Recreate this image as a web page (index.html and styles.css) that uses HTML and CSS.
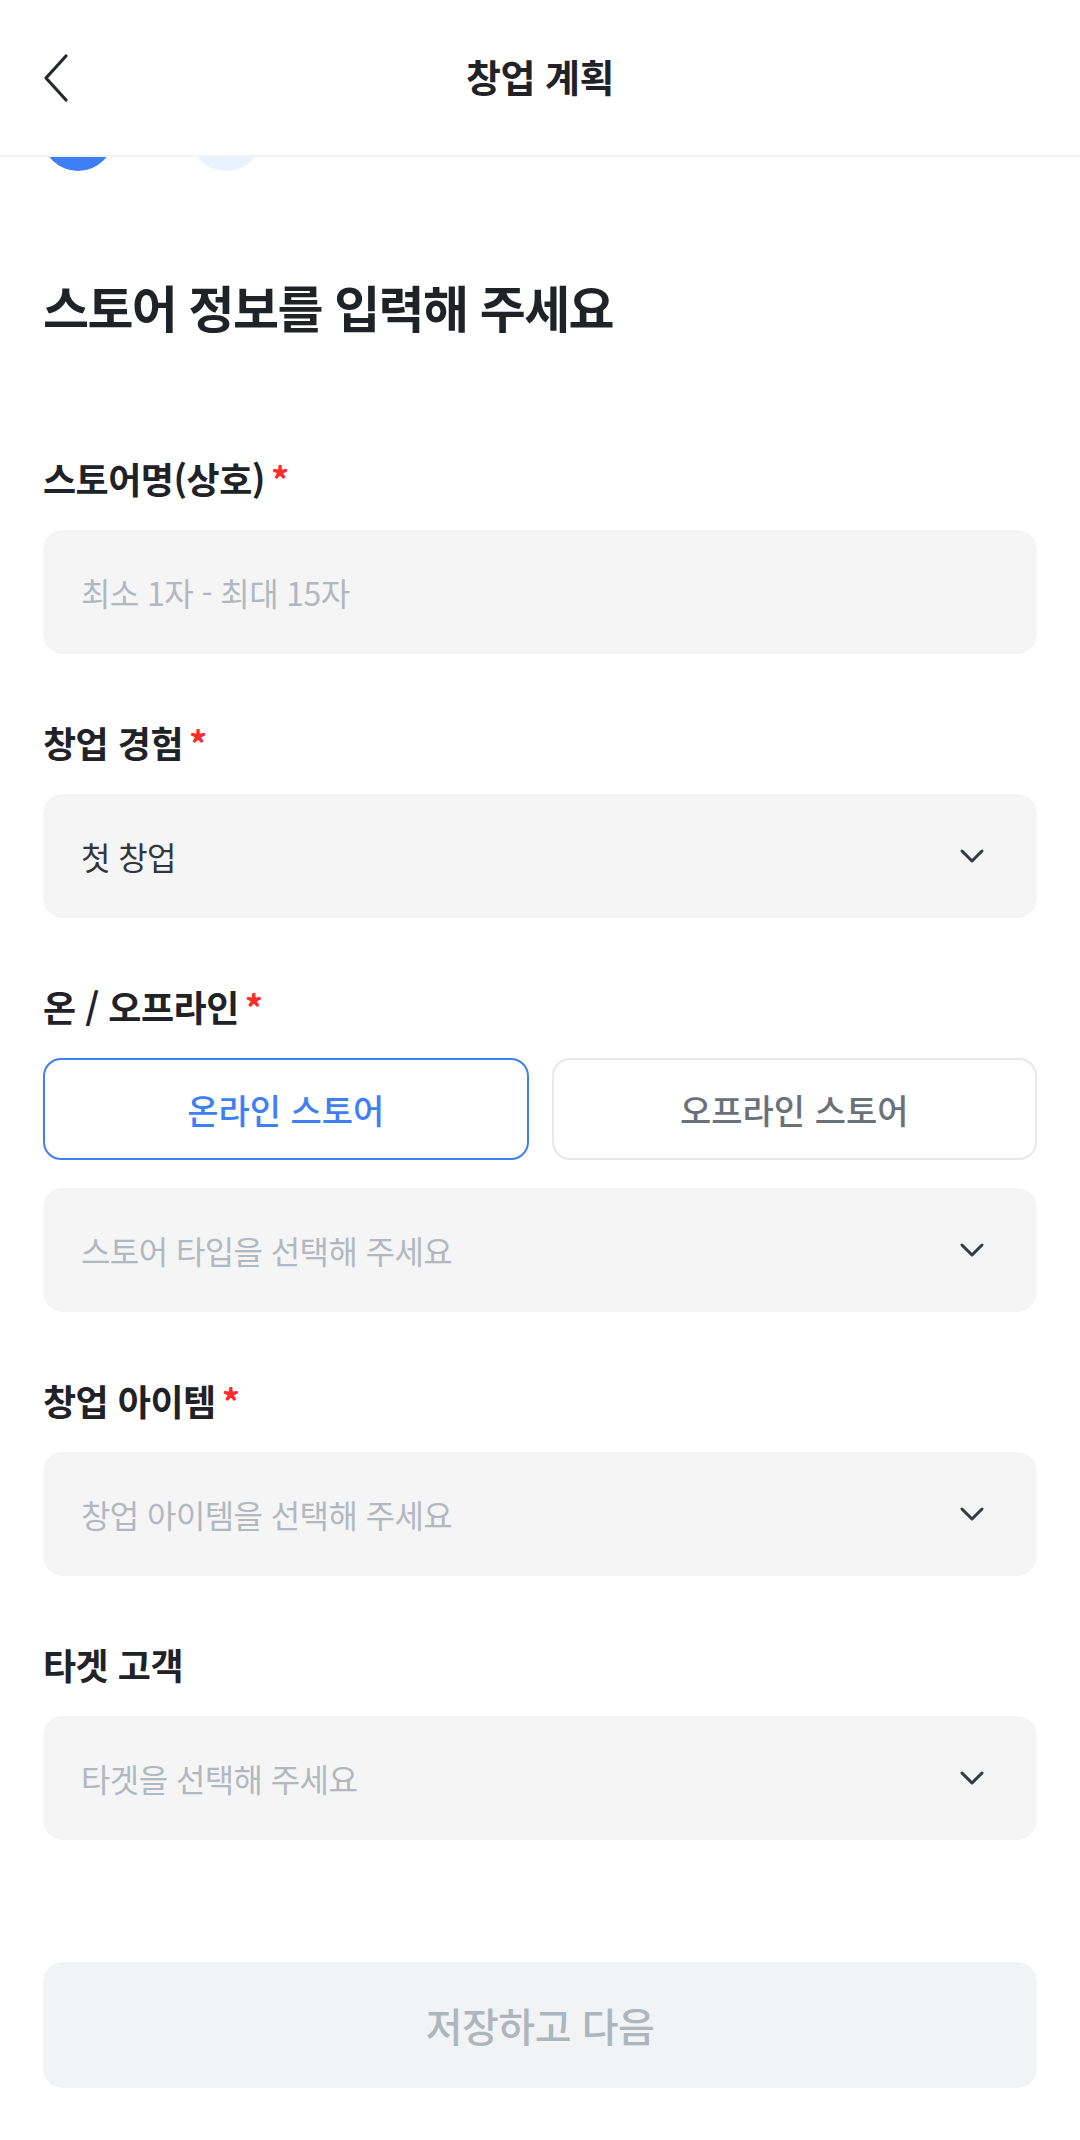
FILE: index.html
```html
<!DOCTYPE html>
<html lang="ko">
<head>
    <meta charset="UTF-8">
    <meta name="viewport" content="width=device-width, initial-scale=1.0">
    <title>창업 계획</title>
    <link rel="stylesheet" href="styles.css">
</head>
<body>
    <div class="header">
        <button class="back-btn" aria-label="뒤로">
            <svg width="26" height="50" viewBox="0 0 26 50"><polyline points="23,3 3,25 23,47" fill="none" stroke="#24272c" stroke-width="3.2" stroke-linecap="round" stroke-linejoin="round"/></svg>
        </button>
        <div class="header-title">창업 계획</div>
        <div></div>
    </div>
    <div class="steps">
        <span class="step active"></span>
        <span class="step"></span>
    </div>
    <div class="content">
        <h1>스토어 정보를 입력해 주세요</h1>
        <div class="form">
            <div class="field">
                <label class="label">스토어명(상호)<span class="req">*</span></label>
                <input class="input" type="text" placeholder="최소 1자 - 최대 15자">
            </div>
            <div class="field">
                <label class="label">창업 경험<span class="req">*</span></label>
                <div class="select">
                    <span class="value">첫 창업</span>
                    <svg class="chev" width="26" height="16" viewBox="0 0 26 16"><polyline points="3,3 13,13 23,3" fill="none" stroke="#343a43" stroke-width="3" stroke-linecap="round" stroke-linejoin="round"/></svg>
                </div>
            </div>
            <div class="field">
                <label class="label">온 / 오프라인<span class="req">*</span></label>
                <div class="toggle">
                    <button class="toggle-btn selected">온라인 스토어</button>
                    <button class="toggle-btn">오프라인 스토어</button>
                </div>
                <div class="select sub">
                    <span class="placeholder">스토어 타입을 선택해 주세요</span>
                    <svg class="chev" width="26" height="16" viewBox="0 0 26 16"><polyline points="3,3 13,13 23,3" fill="none" stroke="#343a43" stroke-width="3" stroke-linecap="round" stroke-linejoin="round"/></svg>
                </div>
            </div>
            <div class="field">
                <label class="label">창업 아이템<span class="req">*</span></label>
                <div class="select">
                    <span class="placeholder">창업 아이템을 선택해 주세요</span>
                    <svg class="chev" width="26" height="16" viewBox="0 0 26 16"><polyline points="3,3 13,13 23,3" fill="none" stroke="#343a43" stroke-width="3" stroke-linecap="round" stroke-linejoin="round"/></svg>
                </div>
            </div>
            <div class="field">
                <label class="label">타겟 고객</label>
                <div class="select">
                    <span class="placeholder">타겟을 선택해 주세요</span>
                    <svg class="chev" width="26" height="16" viewBox="0 0 26 16"><polyline points="3,3 13,13 23,3" fill="none" stroke="#343a43" stroke-width="3" stroke-linecap="round" stroke-linejoin="round"/></svg>
                </div>
            </div>
        </div>
        <button class="next-btn" disabled>저장하고 다음</button>
    </div>
</body>
</html>
```

FILE: styles.css
```css
body {
    margin: 0;
    background-color: #ffffff;
    color: #212429;
    font-family: "Noto Sans CJK KR", "Noto Sans", sans-serif;
}
.header {
    height: 155px;
    display: grid;
    grid-template-columns: 1fr auto 1fr;
    align-items: center;
    border-bottom: 2px solid #f3f3f4;
    background-color: #ffffff;
}
.back-btn {
    justify-self: start;
    margin-left: 43px;
    padding: 0;
    border: none;
    background: none;
    display: flex;
}
.header-title {
    font-size: 38px;
    font-weight: 700;
    letter-spacing: -0.5px;
    color: #1f2227;
    margin-top: -4px;
}
.steps {
    height: 14px;
    overflow: hidden;
    display: flex;
    align-items: flex-end;
    gap: 76px;
    padding-left: 42px;
}
.step {
    flex: none;
    width: 72px;
    height: 72px;
    border-radius: 50%;
    background-color: #ebf2ff;
}
.step.active {
    background-color: #3f7ff6;
}
.content {
    padding: 0 43px;
}
h1 {
    margin: 100px 0 113px;
    font-size: 50px;
    line-height: 70px;
    font-weight: 700;
    letter-spacing: -1.6px;
    color: #1f2227;
}
.form {
    display: flex;
    flex-direction: column;
    gap: 64px;
}
.field {
    display: flex;
    flex-direction: column;
}
.label {
    font-size: 36px;
    line-height: 48px;
    font-weight: 700;
    letter-spacing: -0.5px;
    color: #1f2227;
    margin-bottom: 28px;
}
.req {
    color: #ff2b2b;
    margin-left: 6px;
}
.input,
.select {
    box-sizing: border-box;
    height: 124px;
    width: 100%;
    border: none;
    border-radius: 20px;
    background-color: #f5f5f5;
    padding: 0 52px 0 38px;
    font-family: inherit;
    font-size: 32px;
    letter-spacing: -0.6px;
    color: #33373d;
    outline: none;
}
.input::placeholder {
    color: #b1b8c0;
}
.select {
    display: flex;
    align-items: center;
    justify-content: space-between;
}
.placeholder {
    color: #b1b8c0;
}
.value {
    color: #33373d;
}
.chev {
    flex: none;
}
.select.sub {
    margin-top: 28px;
}
.toggle {
    display: flex;
    gap: 23px;
}
.toggle-btn {
    flex: 1;
    height: 102px;
    box-sizing: border-box;
    border: 2px solid #e7e8ea;
    border-radius: 18px;
    background-color: #ffffff;
    font-family: inherit;
    font-size: 34px;
    font-weight: 500;
    letter-spacing: 0;
    color: #6b7179;
}
.toggle-btn.selected {
    border-color: #3f7ff6;
    color: #3f7ff6;
}
.next-btn {
    display: block;
    width: 100%;
    height: 126px;
    margin-top: 122px;
    border: none;
    border-radius: 20px;
    background-color: #f2f3f5;
    font-family: inherit;
    font-size: 40px;
    font-weight: 500;
    letter-spacing: -0.5px;
    color: #adb5bd;
}
```
